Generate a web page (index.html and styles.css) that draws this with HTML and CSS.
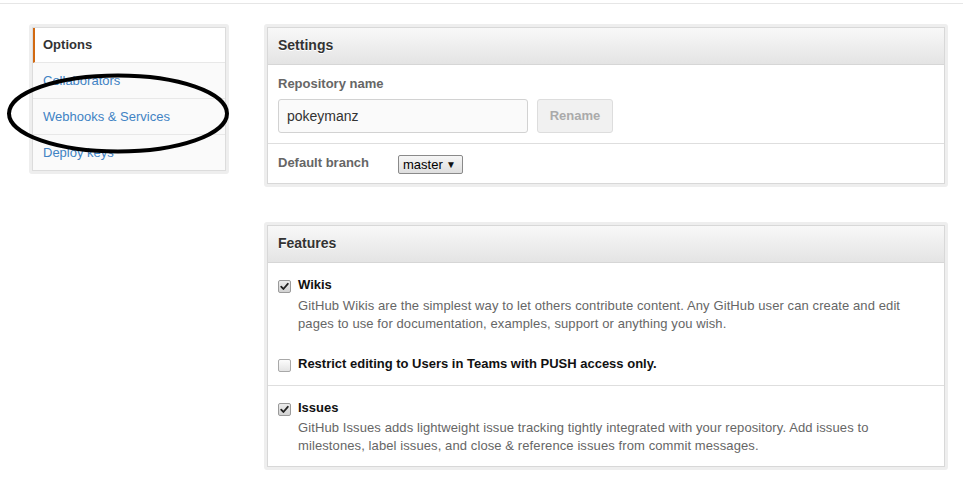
FILE: index.html
```html
<!DOCTYPE html>
<html lang="en">
<head>
<meta charset="utf-8">
<title>Repository settings</title>
<link rel="stylesheet" href="styles.css">
</head>
<body>
<div class="topbar"></div>
<div class="page">
  <aside class="sidebar">
    <nav class="menu">
      <a class="menu-item selected">Options</a>
      <a class="menu-item">Collaborators</a>
      <a class="menu-item">Webhooks &amp; Services</a>
      <a class="menu-item">Deploy keys</a>
    </nav>
  </aside>
  <main class="main">
    <section class="boxed">
      <div class="boxed-inner">
        <h3 class="boxed-head">Settings</h3>
        <div class="row row-name">
          <div class="label">Repository name</div>
          <div class="rename-line">
            <input class="text-input" type="text" value="pokeymanz">
            <button class="btn" type="button">Rename</button>
          </div>
        </div>
        <div class="row row-branch">
          <span class="label branch-label">Default branch</span>
          <span class="select">master <span class="arrow">&#9660;</span></span>
        </div>
      </div>
    </section>

    <section class="boxed features">
      <div class="boxed-inner">
        <h3 class="boxed-head">Features</h3>
        <div class="feature-group first">
          <div class="feature">
            <span class="check checked"><svg viewBox="0 0 13 13" width="13" height="13"><path d="M3.2 6.6 L5.4 9 L9.8 3.8" fill="none" stroke="#222" stroke-width="1.8" stroke-linecap="round" stroke-linejoin="round"/></svg></span>
            <div class="feature-body">
              <div class="feature-title">Wikis</div>
              <p class="feature-desc">GitHub Wikis are the simplest way to let others contribute content. Any GitHub user can create and edit pages to use for documentation, examples, support or anything you wish.</p>
            </div>
          </div>
          <div class="feature restrict">
            <span class="check"></span>
            <div class="feature-body">
              <div class="feature-title">Restrict editing to Users in Teams with PUSH access only.</div>
            </div>
          </div>
        </div>
        <div class="feature-group last">
          <div class="feature">
            <span class="check checked"><svg viewBox="0 0 13 13" width="13" height="13"><path d="M3.2 6.6 L5.4 9 L9.8 3.8" fill="none" stroke="#222" stroke-width="1.8" stroke-linecap="round" stroke-linejoin="round"/></svg></span>
            <div class="feature-body">
              <div class="feature-title">Issues</div>
              <p class="feature-desc tight">GitHub Issues adds lightweight issue tracking tightly integrated with your repository. Add issues to milestones, label issues, and close &amp; reference issues from commit messages.</p>
            </div>
          </div>
        </div>
      </div>
    </section>
  </main>
</div>
<svg class="annotation" width="240" height="170" viewBox="0 0 240 170" aria-hidden="true">
  <ellipse cx="118" cy="113.5" rx="109" ry="38" fill="none" stroke="#000" stroke-width="4"/>
</svg>
</body>
</html>
```

FILE: styles.css
```css
* { box-sizing: border-box; }

html, body {
  margin: 0;
  padding: 0;
  background: #fff;
}

body {
  font-family: "Liberation Sans", Arial, Helvetica, sans-serif;
  font-size: 13px;
  color: #333;
  position: relative;
  width: 963px;
  height: 486px;
  overflow: hidden;
}

.topbar {
  height: 4px;
  border-bottom: 1px solid #e6e6e6;
}

.page {
  display: flex;
  align-items: flex-start;
  gap: 35px;
  padding: 20px 0 0 29px;
}

/* Sidebar menu */
.sidebar {
  width: 200px;
  padding: 3px;
  background: #eeeeee;
  border-radius: 3px;
}

.menu {
  display: flex;
  flex-direction: column;
  border: 1px solid #dcdcdc;
  background: #fafafa;
}

.menu-item {
  display: block;
  height: 36px;
  line-height: 35px;
  padding: 0 10px;
  color: #4183c4;
  background: #fafafa;
  border-bottom: 1px solid #e8e8e8;
  text-decoration: none;
  white-space: nowrap;
}

.menu-item:last-child {
  border-bottom: 0;
  height: 35px;
}

.menu-item.selected {
  background: #fff;
  color: #333;
  font-weight: bold;
  border-left: 2px solid #d26911;
  padding-left: 8px;
  height: 35px;
  line-height: 34px;
}

/* Main column */
.main {
  width: 684px;
  display: flex;
  flex-direction: column;
}

.boxed {
  padding: 3px;
  background: #eeeeee;
  border-radius: 3px;
}

.boxed.features {
  margin-top: 35px;
}

.boxed-inner {
  border: 1px solid #d8d8d8;
  background: #fff;
}

.boxed-head {
  margin: 0;
  height: 37px;
  line-height: 35px;
  padding: 0 10px;
  font-size: 14px;
  font-weight: bold;
  color: #333;
  text-shadow: 0 1px 0 #fff;
  background: linear-gradient(#f8f8f8, #e4e4e4);
  border-bottom: 1px solid #d6d6d6;
}

.row {
  padding: 0 10px;
}

.row-name {
  padding-top: 10px;
  padding-bottom: 10px;
}

.label {
  font-weight: bold;
  color: #666;
  line-height: 18px;
}

.rename-line {
  display: flex;
  gap: 9px;
  margin-top: 6px;
}

.text-input {
  width: 250px;
  height: 34px;
  margin: 0;
  padding: 0 8px 1px;
  border: 1px solid #d2d2d2;
  border-radius: 3px;
  background: #fafafa;
  font-family: inherit;
  font-size: 14px;
  color: #333;
  outline: none;
}

.btn {
  width: 76px;
  height: 34px;
  margin: 0;
  padding: 0 0 2px;
  border: 1px solid #dddddd;
  border-radius: 3px;
  background: #f1f1f1;
  color: #aaa;
  font-family: inherit;
  font-size: 13px;
  font-weight: bold;
}

.row-branch {
  display: flex;
  align-items: center;
  height: 40px;
  border-top: 1px solid #dedede;
}

.branch-label {
  width: 120px;
  margin-top: -1px;
}

.select {
  display: inline-flex;
  align-items: center;
  justify-content: space-between;
  width: 65px;
  height: 19px;
  padding: 0 6px 0 4px;
  border: 1px solid #8a8a8a;
  border-radius: 2px;
  background: linear-gradient(#f6f6f6, #dedede);
  color: #000;
  font-size: 13px;
  line-height: 17px;
  margin-top: 1px;
}

.arrow {
  font-size: 10px;
  color: #111;
}

/* Features */
.feature-group {
  padding: 13px 10px 12px;
}

.feature-group.last {
  border-top: 1px solid #dedede;
  padding-top: 13px;
  padding-bottom: 11px;
}

.feature {
  display: flex;
  gap: 7px;
  align-items: flex-start;
}

.feature.restrict {
  margin-top: 22px;
}

.feature-body {
  max-width: 614px;
}

.check {
  flex: none;
  width: 13px;
  height: 13px;
  margin-top: 4px;
  border: 1px solid #a8a8a8;
  border-radius: 2px;
  background: linear-gradient(#fcfcfc, #e4e4e4);
  display: flex;
  align-items: center;
  justify-content: center;
  overflow: hidden;
}

.check.checked {
  background: linear-gradient(#ececec, #d2d2d2);
  border-color: #9a9a9a;
}

.check svg {
  display: block;
  flex: none;
}

.feature-title {
  font-weight: bold;
  color: #111;
  line-height: 18px;
  white-space: nowrap;
}

.feature-desc {
  margin: 3px 0 0;
  color: #666;
  line-height: 18px;
  letter-spacing: 0.1px;
}

.feature-desc.tight {
  margin-top: 2px;
}

/* Hand-drawn annotation over the sidebar */
.annotation {
  position: absolute;
  left: 0;
  top: 0;
  pointer-events: none;
}
```
